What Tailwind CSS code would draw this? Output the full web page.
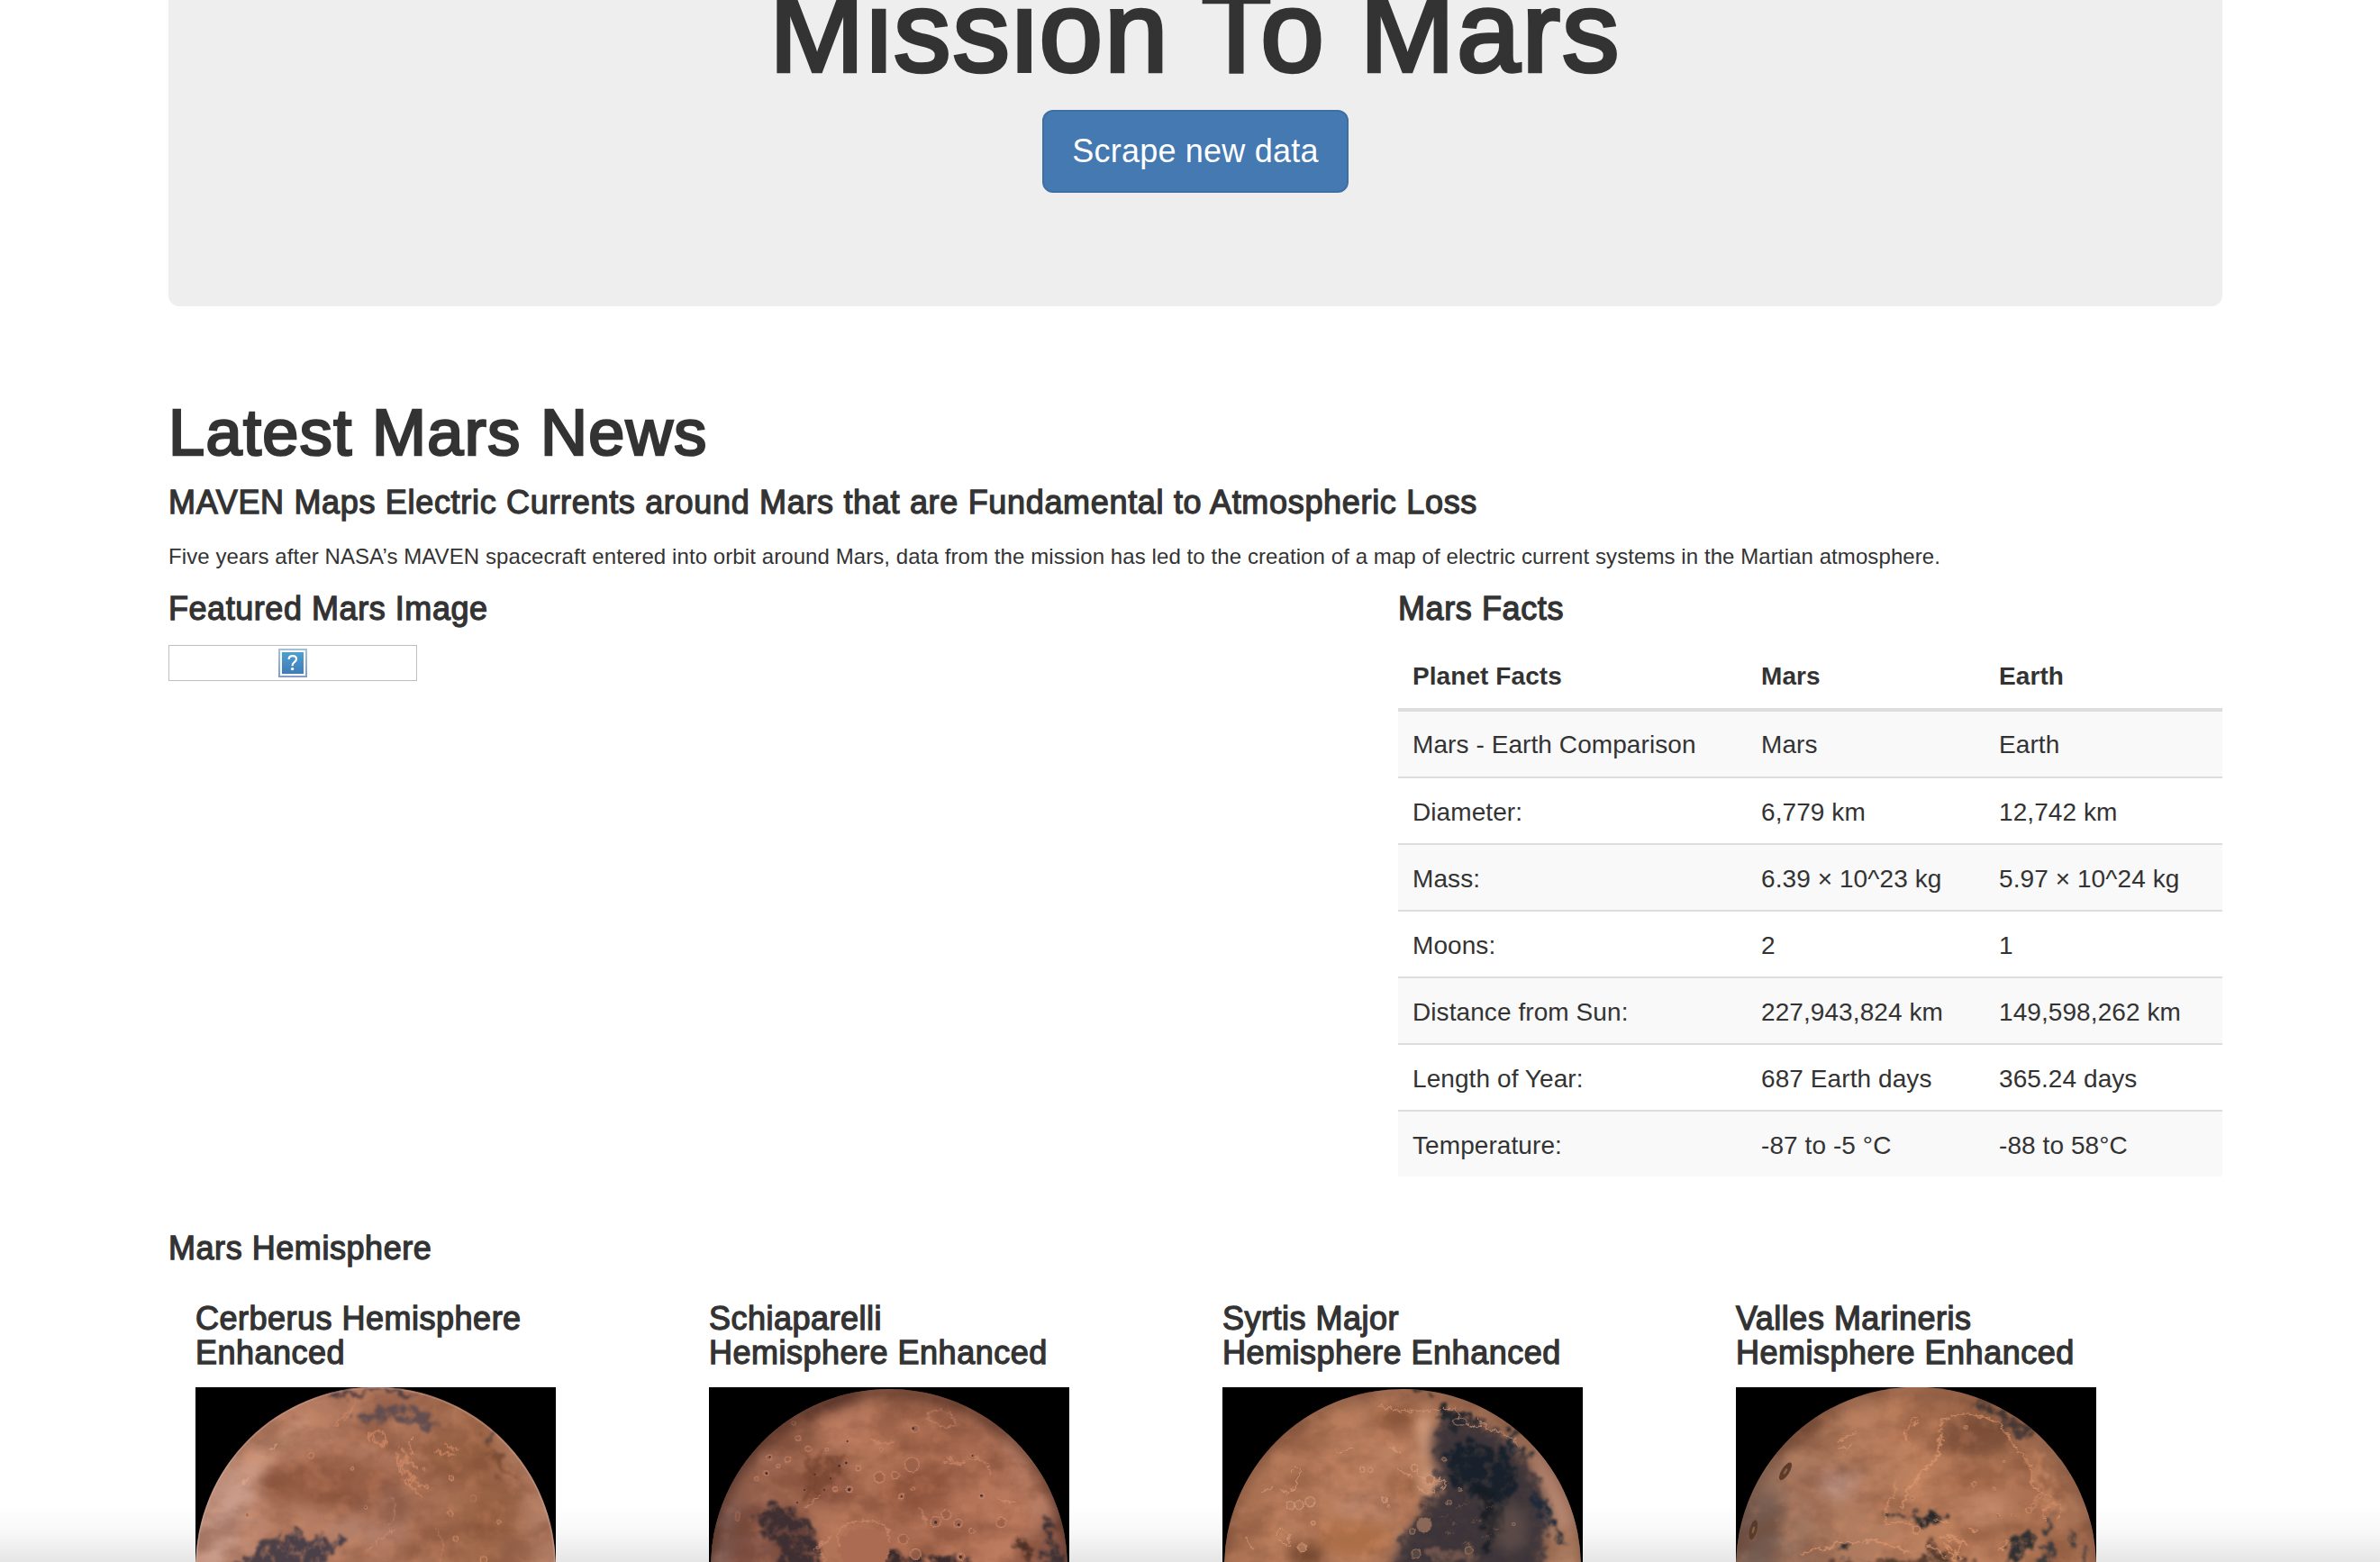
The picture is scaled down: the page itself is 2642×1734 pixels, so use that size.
<!DOCTYPE html>
<html lang="en">
<head>
<meta charset="utf-8">
<title>Mission To Mars</title>
<script src="https://cdn.jsdelivr.net/npm/@tailwindcss/browser@4"></script>
</head>
<body class="bg-white text-[#333] font-['Liberation_Sans',Arial,sans-serif] h-[1734px] overflow-hidden whitespace-nowrap relative">

<!-- shared planet filters -->
<svg class="absolute w-0 h-0" aria-hidden="true">
  <defs>
    <filter id="rough" x="-30%" y="-30%" width="160%" height="160%" color-interpolation-filters="sRGB">
      <feTurbulence type="fractalNoise" baseFrequency="0.025" numOctaves="6" seed="4" result="n"/>
      <feDisplacementMap in="SourceGraphic" in2="n" scale="90" xChannelSelector="R" yChannelSelector="G" result="d"/>
      <feGaussianBlur in="d" stdDeviation="5" result="b"/>
      <feTurbulence type="fractalNoise" baseFrequency="0.03" numOctaves="5" seed="31"/>
      <feColorMatrix values="0 0 0 0 0  0 0 0 0 0  0 0 0 0 0  3.4 0 0 0 -0.85" result="m"/>
      <feComposite in="b" in2="m" operator="in" result="t"/>
      <feComponentTransfer in="b" result="f"><feFuncA type="linear" slope="0.45"/></feComponentTransfer>
      <feMerge><feMergeNode in="f"/><feMergeNode in="t"/></feMerge>
    </filter>
    <filter id="fine" x="-20%" y="-20%" width="140%" height="140%" color-interpolation-filters="sRGB">
      <feTurbulence type="fractalNoise" baseFrequency="0.06" numOctaves="4" seed="8" result="n"/>
      <feDisplacementMap in="SourceGraphic" in2="n" scale="26" xChannelSelector="R" yChannelSelector="G"/>
      <feGaussianBlur stdDeviation="1.2"/>
    </filter>
    <filter id="ring" x="-5%" y="-5%" width="110%" height="110%" color-interpolation-filters="sRGB">
      <feTurbulence type="fractalNoise" baseFrequency="0.08" numOctaves="3" seed="5" result="n"/>
      <feDisplacementMap in="SourceGraphic" in2="n" scale="9" xChannelSelector="R" yChannelSelector="G"/>
      <feGaussianBlur stdDeviation="0.9"/>
    </filter>
    <filter id="soft" x="-60%" y="-60%" width="220%" height="220%" color-interpolation-filters="sRGB"><feGaussianBlur stdDeviation="20"/></filter>
    <filter id="darkNoise" x="0" y="0" width="100%" height="100%" color-interpolation-filters="sRGB">
      <feTurbulence type="fractalNoise" baseFrequency="0.006 0.009" numOctaves="7" seed="11"/>
      <feColorMatrix values="0 0 0 0 0.44  0 0 0 0 0.25  0 0 0 0 0.17  3 0 0 0 -1.2"/>
    </filter>
    <filter id="lightNoise" x="0" y="0" width="100%" height="100%" color-interpolation-filters="sRGB">
      <feTurbulence type="fractalNoise" baseFrequency="0.014" numOctaves="7" seed="23"/>
      <feColorMatrix values="0 0 0 0 0.88  0 0 0 0 0.59  0 0 0 0 0.44  0 3.4 0 0 -1.65"/>
    </filter>
    <radialGradient id="limb" gradientUnits="userSpaceOnUse" cx="600" cy="620" r="600">
      <stop offset="0.8" stop-color="#3a2018" stop-opacity="0"/><stop offset="0.94" stop-color="#3a2018" stop-opacity="0.12"/><stop offset="1" stop-color="#2a1612" stop-opacity="0.4"/>
    </radialGradient>
    <linearGradient id="g1" x1="0" y1="0.6" x2="1" y2="0.6"><stop offset="0" stop-color="#c09483"/><stop offset="0.22" stop-color="#b98066"/><stop offset="0.5" stop-color="#ad755c"/><stop offset="0.8" stop-color="#a16a4c"/><stop offset="1" stop-color="#b5826b"/></linearGradient>
    <linearGradient id="g2" x1="0" y1="0.4" x2="1" y2="0.6"><stop offset="0" stop-color="#8d5c4c"/><stop offset="0.4" stop-color="#b37559"/><stop offset="0.6" stop-color="#a86a50"/><stop offset="0.9" stop-color="#bd7c60"/><stop offset="1" stop-color="#956252"/></linearGradient>
    <linearGradient id="g3" x1="0" y1="0.4" x2="1" y2="0.6"><stop offset="0" stop-color="#ab7252"/><stop offset="0.45" stop-color="#bc8161"/><stop offset="0.8" stop-color="#a9785d"/><stop offset="1" stop-color="#b48468"/></linearGradient>
    <linearGradient id="g4" x1="0" y1="0.6" x2="1" y2="0.4"><stop offset="0" stop-color="#86695b"/><stop offset="0.2" stop-color="#ab7a60"/><stop offset="0.5" stop-color="#bc805e"/><stop offset="0.8" stop-color="#aa7152"/><stop offset="1" stop-color="#b07c60"/></linearGradient>
    <clipPath id="discA"><circle cx="600" cy="599" r="600"/></clipPath>
    <clipPath id="discB"><circle cx="600" cy="600" r="594"/></clipPath>
  </defs>
</svg>

<main class="ml-[187px] w-[2280px] flex flex-col">
  <header class="h-[340px] rounded-b-[12px] bg-[#eee] flex flex-col items-center">
    <h1 class="-mt-[33px] h-[138px] text-[126px] leading-[138px] tracking-[2.5px] [-webkit-text-stroke:4.4px_#333]">Mission To Mars</h1>
    <a class="mt-[17px] flex h-[92px] w-[340px] items-center justify-center rounded-[12px] border-2 border-[#3d6fa5] bg-[#4579b2] text-[36px] leading-[48px] tracking-[0.22px] text-white">Scrape new data</a>
  </header>

  <section class="flex flex-col">
    <h1 class="mt-[100px] text-[72px] leading-[80px] tracking-[1.4px] [-webkit-text-stroke:2.700px_#333]">Latest Mars News</h1>
    <h3 class="mt-[19px] text-[36px] leading-[38px] tracking-[0.68px] [-webkit-text-stroke:1.300px_#333]">MAVEN Maps Electric Currents around Mars that are Fundamental to Atmospheric Loss</h3>
    <p class="mt-[24px] text-[24px] leading-[34px] tracking-[0.085px]">Five years after NASA’s MAVEN spacecraft entered into orbit around Mars, data from the mission has led to the creation of a map of electric current systems in the Martian atmosphere.</p>
  </section>

  <section class="mt-[22px] flex justify-between">
    <div>
      <h3 class="text-[36px] leading-[38px] tracking-[0.55px] [-webkit-text-stroke:1.300px_#333]">Featured Mars Image</h3>
      <div class="mt-[21px] flex h-[40px] w-[276px] items-center justify-center border border-[#bfbfbf]">
        <svg width="32" height="32" viewBox="0 0 32 32">
          <defs>
            <linearGradient id="qb" x2="0" y2="1"><stop stop-color="#a6c1dd"/><stop offset="1" stop-color="#7f9dc7"/></linearGradient>
            <linearGradient id="qf" x2="0" y2="1"><stop stop-color="#4c9fd1"/><stop offset="1" stop-color="#3f7db8"/></linearGradient>
          </defs>
          <rect width="32" height="32" fill="url(#qb)"/><rect x="2" y="2" width="28" height="28" fill="#fff"/><rect x="4" y="4" width="24" height="24" fill="url(#qf)"/>
          <path d="M11.600 12c0-2.400 1.700-3.900 4.200-3.900 2.500 0 4.200 1.400 4.200 3.500 0 1.700-.9 2.600-2.200 3.500-1.500 1-2.100 1.700-2.100 3.200v1" fill="none" stroke="#fff" stroke-width="2.200"/><circle cx="15.600" cy="22.600" r="1.700" fill="#fff"/>
        </svg>
      </div>
    </div>
    <div class="w-[915px]">
      <h3 class="text-[36px] leading-[38px] tracking-[0.6px] [-webkit-text-stroke:1.300px_#333]">Mars Facts</h3>
      <div class="mt-[19px] text-[28px] leading-[40px] tracking-[0.08px] *:grid *:grid-cols-[387px_264px_264px] *:border-[#ddd] *:*:pl-4">
        <div class="h-[76px] border-b-4 pt-[17px] font-bold"><span>Planet Facts</span><span>Mars</span><span>Earth</span></div>
        <div class="h-[74px] border-b-2 bg-[#f9f9f9] pt-[17px]"><span>Mars - Earth Comparison</span><span>Mars</span><span>Earth</span></div>
        <div class="h-[74px] border-b-2 pt-[18px]"><span>Diameter:</span><span>6,779 km</span><span>12,742 km</span></div>
        <div class="h-[74px] border-b-2 bg-[#f9f9f9] pt-[18px]"><span>Mass:</span><span>6.39 × 10^23 kg</span><span>5.97 × 10^24 kg</span></div>
        <div class="h-[74px] border-b-2 pt-[18px]"><span>Moons:</span><span>2</span><span>1</span></div>
        <div class="h-[74px] border-b-2 bg-[#f9f9f9] pt-[18px]"><span>Distance from Sun:</span><span>227,943,824 km</span><span>149,598,262 km</span></div>
        <div class="h-[74px] border-b-2 pt-[18px]"><span>Length of Year:</span><span>687 Earth days</span><span>365.24 days</span></div>
        <div class="h-[72px] bg-[#f9f9f9] pt-[18px]"><span>Temperature:</span><span>-87 to -5 °C</span><span>-88 to 58°C</span></div>
      </div>
    </div>
  </section>

  <section class="mt-[61px]">
    <h3 class="text-[36px] leading-[38px] tracking-[0.55px] [-webkit-text-stroke:1.300px_#333]">Mars Hemisphere</h3>
    <div class="relative z-10 mt-[40px] grid grid-cols-4 pl-[30px] w-[2310px] text-[36px] leading-[38px] tracking-[0.5px]">

      <figure>
        <figcaption class="[-webkit-text-stroke:1.300px_#333]">Cerberus Hemisphere<br>Enhanced</figcaption>
        <svg class="mt-[19px] block bg-black" width="400" height="194" viewBox="0 0 1200 582">
          <g clip-path="url(#discA)">
            <rect width="1200" height="600" fill="url(#g1)"/>
            <g filter="url(#soft)">
              <ellipse cx="440" cy="320" rx="220" ry="80" fill="#8f573f" opacity=".75"/>
              <ellipse cx="880" cy="230" rx="120" ry="70" fill="#925d3f" opacity=".6"/>
              <ellipse cx="1000" cy="420" rx="80" ry="120" fill="#8f5a3c" opacity=".5"/>
              <ellipse cx="120" cy="420" rx="50" ry="200" fill="#cfa494" opacity=".7" transform="rotate(24 120 420)"/>
              <ellipse cx="270" cy="190" rx="140" ry="36" fill="#cf9a80" opacity=".7" transform="rotate(-40 270 190)"/>
              <ellipse cx="660" cy="410" rx="50" ry="90" fill="#855c50" opacity=".5"/>
              <ellipse cx="560" cy="480" rx="140" ry="50" fill="#b5836f" opacity=".6"/>
            </g>
            <rect width="1200" height="600" filter="url(#darkNoise)" opacity=".35"/>
            <rect width="1200" height="600" filter="url(#lightNoise)" opacity=".22"/>
            <g filter="url(#rough)">
              <path d="M540 100Q600 65 690 72Q780 82 810 128Q760 145 710 118Q640 90 540 115Z" fill="#5d4b50" opacity=".85"/>
              <path d="M440 22Q620 -8 780 22L690 26Q600 12 440 34Z" fill="#503d42"/>
              <path d="M150 580Q220 510 290 500Q330 470 350 500Q400 510 500 500Q490 540 420 570L380 620H130Z" fill="#4b4048"/>
              <path d="M955 135l40 25-10 15z" fill="#453a40"/>
              <path d="M980 170Q1000 250 1060 320Q1010 290 970 220Z" fill="#7c4d35"/>
            </g>
            <g filter="url(#fine)" fill="none" stroke="#dc9069" stroke-width="7" stroke-linecap="round" opacity=".6">
              <path d="M590 150q10 60 40 40q10-40-20-45q-40 5-30 30M690 200l20 50-30 10 50 40-40 10 60 50M680 250h40M830 190l40 20M800 215l60 10M720 300q20 30 50 30M670 220l10 60 30 10M700 240l40 30M710 180l10 40"/>
              <path d="M570 550q50-50 90-80M460 130q30-30 60-60M500 110q20-30 30-50" stroke-width="4"/>
              <path d="M160 320q10-20 20-20M255 205l15-15" stroke="#e4ac8c"/>
              <path d="M800 470q40 50 10 130M650 360q30 40 0 100" stroke-width="4" opacity=".6"/>
            </g>
            <g fill="#a66a4c" stroke="#d69370" stroke-width="3" filter="url(#ring)" opacity=".85">
              <circle cx="385" cy="228" r="9"/><circle cx="522" cy="270" r="6"/><circle cx="852" cy="302" r="8"/><circle cx="848" cy="420" r="8"/><circle cx="866" cy="504" r="9"/><circle cx="1010" cy="448" r="6"/><circle cx="715" cy="316" r="6"/><circle cx="172" cy="425" r="7"/><circle cx="760" cy="272" r="5"/><circle cx="925" cy="370" r="11" opacity=".5"/><circle cx="960" cy="575" r="12"/><circle cx="567" cy="400" r="5" fill="#55413b"/><circle cx="720" cy="170" r="5"/><circle cx="450" cy="180" r="3" fill="#55413b"/><circle cx="680" cy="200" r="3" fill="#383038"/><circle cx="770" cy="332" r="6"/>
            </g>
            <circle cx="600" cy="599" r="597" fill="none" stroke="#d3b0a5" stroke-width="5" opacity=".4"/>
          </g>
        </svg>
      </figure>

      <figure>
        <figcaption class="[-webkit-text-stroke:1.300px_#333]">Schiaparelli<br>Hemisphere Enhanced</figcaption>
        <svg class="mt-[19px] block bg-black" width="400" height="194" viewBox="0 0 1200 582">
          <g clip-path="url(#discB)">
            <rect width="1200" height="600" fill="url(#g2)"/>
            <g filter="url(#soft)">
              <ellipse cx="500" cy="130" rx="150" ry="70" fill="#c78468" opacity=".7"/>
              <ellipse cx="390" cy="320" rx="100" ry="70" fill="#804c3b" opacity=".7"/>
              <ellipse cx="690" cy="340" rx="120" ry="70" fill="#8f533c" opacity=".7"/>
              <ellipse cx="1060" cy="300" rx="50" ry="160" fill="#d09075" opacity=".7" transform="rotate(-25 1060 300)"/>
              <ellipse cx="180" cy="500" rx="180" ry="110" fill="#734a42" opacity=".7"/>
              <ellipse cx="390" cy="70" rx="110" ry="22" fill="#633a2d" opacity=".8" transform="rotate(-28 390 70)"/>
              <ellipse cx="50" cy="500" rx="30" ry="130" fill="#8c706f" opacity=".7" transform="rotate(15 50 500)"/>
            </g>
            <rect width="1200" height="600" filter="url(#darkNoise)" opacity=".4"/>
            <rect width="1200" height="600" filter="url(#lightNoise)" opacity=".2"/>
            <g filter="url(#rough)">
              <path d="M220 620Q250 570 230 530Q180 500 160 410Q250 380 320 430Q350 500 370 550L390 620Z" fill="#3c2d31" opacity=".9"/>
              <path d="M590 530Q660 560 720 565Q800 545 850 580L930 620H580Z" fill="#3b2b2c"/>
              <path d="M320 240Q400 230 460 210L440 300Q380 320 360 390L300 380Q350 310 320 240Z" fill="#74432f" opacity=".6"/>
              <path d="M1110 410Q1150 480 1190 620H1100Q1140 560 1110 410Z" fill="#413539"/>
              <path d="M1020 480l30 40 30 40-40-10z" fill="#4f3026"/>
            </g>
            <ellipse cx="515" cy="540" rx="85" ry="72" fill="#ab6b53" filter="url(#fine)"/>
            <g filter="url(#fine)" fill="none" stroke="#d08e70" stroke-width="5" stroke-linecap="round" opacity=".65">
              <path d="M430 530q-20-80 80-85t90 70M350 545q30-30 60-50M790 230q30 30 60 20M780 250l60 10M860 240q60-20 80 50M540 170q40 30 80 10M700 400q20 40 30 60M320 400l50-40M960 370q30 20 60 10M365 520l20 60M400 500l-30 30"/>
              <path d="M730 100q40 50 90 25q0-50-70-50q-30 10-20 25"/>
            </g>
            <g fill="#9c614a" stroke="#cc8b6e" stroke-width="3.500" filter="url(#ring)" opacity=".85">
              <circle cx="676" cy="258" r="24"/><circle cx="567" cy="300" r="18"/><circle cx="620" cy="293" r="12"/><circle cx="686" cy="138" r="12"/><circle cx="262" cy="240" r="9"/><circle cx="200" cy="234" r="8"/><circle cx="190" cy="286" r="8"/><circle cx="790" cy="425" r="16"/><circle cx="755" cy="448" r="17"/><circle cx="830" cy="453" r="14"/><circle cx="973" cy="450" r="17"/><circle cx="646" cy="505" r="16"/><circle cx="688" cy="556" r="18"/><circle cx="875" cy="478" r="9"/><circle cx="468" cy="340" r="10"/><circle cx="330" cy="205" r="9"/><circle cx="296" cy="170" r="8"/><circle cx="680" cy="338" r="6"/><circle cx="573" cy="208" r="5"/><circle cx="392" cy="208" r="5"/><circle cx="497" cy="270" r="8"/><circle cx="420" cy="340" r="8"/><circle cx="640" cy="364" r="8"/><circle cx="909" cy="362" r="8"/><ellipse cx="95" cy="430" rx="7" ry="15" opacity=".6"/><circle cx="158" cy="305" r="7"/><circle cx="230" cy="262" r="6"/><circle cx="282" cy="120" r="7"/><circle cx="840" cy="565" r="11"/>
            </g>
            <g fill="#3a3034">
              <circle cx="434" cy="262" r="4"/><circle cx="457" cy="252" r="4"/><circle cx="352" cy="290" r="3"/><circle cx="405" cy="304" r="3"/><circle cx="467" cy="341" r="5"/><circle cx="294" cy="384" r="3"/><circle cx="907" cy="361" r="4"/><circle cx="755" cy="450" r="5"/><circle cx="192" cy="287" r="4"/><circle cx="203" cy="232" r="3"/><circle cx="680" cy="137" r="4"/><circle cx="838" cy="565" r="5"/><circle cx="832" cy="458" r="4"/><circle cx="461" cy="180" r="3"/><circle cx="318" cy="342" r="3"/><circle cx="642" cy="364" r="3"/><circle cx="878" cy="228" r="3"/><circle cx="384" cy="342" r="3"/>
            </g>
            <rect width="1200" height="600" fill="url(#limb)"/>
          </g>
        </svg>
      </figure>

      <figure>
        <figcaption class="[-webkit-text-stroke:1.300px_#333]">Syrtis Major<br>Hemisphere Enhanced</figcaption>
        <svg class="mt-[19px] block bg-black" width="400" height="194" viewBox="0 0 1200 582">
          <g clip-path="url(#discB)">
            <rect width="1200" height="600" fill="url(#g3)"/>
            <g filter="url(#soft)">
              <ellipse cx="570" cy="100" rx="70" ry="35" fill="#8c5638" opacity=".8"/>
              <ellipse cx="600" cy="320" rx="60" ry="45" fill="#8f5b3d" opacity=".8"/>
              <ellipse cx="440" cy="500" rx="120" ry="70" fill="#a86a42" opacity=".8"/>
              <ellipse cx="280" cy="560" rx="60" ry="35" fill="#744a32"/>
              <ellipse cx="470" cy="400" rx="90" ry="50" fill="#c5917a" opacity=".6"/>
            </g>
            <rect width="1200" height="600" filter="url(#darkNoise)" opacity=".3"/>
            <rect width="1200" height="600" filter="url(#lightNoise)" opacity=".25"/>
            <g filter="url(#soft)">
              <path d="M700 150Q760 80 830 110Q960 170 1010 260Q1070 350 1090 440Q1050 500 1060 620H560Q560 560 640 460Q700 380 740 350Q690 260 700 150Z" fill="#3c3438" opacity=".9"/>
              <ellipse cx="672" cy="160" rx="16" ry="90" fill="#dba688"/>
              <ellipse cx="690" cy="310" rx="40" ry="45" fill="#d09a7c"/>
              <ellipse cx="1110" cy="350" rx="34" ry="160" fill="#bf8d76" transform="rotate(-24 1110 350)"/>
            </g>
            <g filter="url(#rough)">
              <path d="M715 130Q760 85 830 115Q900 150 960 160Q1000 200 1010 260Q1060 330 1090 440Q1060 480 1080 620H580Q610 570 580 510Q660 460 680 370Q740 350 730 310Q700 260 715 130Z" fill="#38343b" opacity=".6"/>
              <path d="M740 220Q840 150 940 220Q990 330 950 390L800 350Q740 320 740 220Z" fill="#18212b"/>
              <path d="M840 320Q920 350 935 420Q930 520 850 570Q900 450 840 320Z" fill="#171c22" opacity=".8"/>
              <path d="M1030 350Q1100 390 1110 470Q1060 440 1030 350ZM1105 450l35 70-25 5zM940 160q60 20 80 90l-60-40z" fill="#1d2a3a"/>
              <path d="M610 0l80 10-50 10zM720 80q70-10 130 40l-80 20z" fill="#24272e"/>
            </g>
            <ellipse cx="960" cy="470" rx="60" ry="80" fill="#7d6257" opacity=".45" filter="url(#soft)"/>
            <ellipse cx="760" cy="560" rx="80" ry="30" fill="#7c5c50" opacity=".8" filter="url(#rough)"/>
            <g filter="url(#fine)" fill="none" stroke="#d79a78" stroke-width="5" stroke-linecap="round" opacity=".7">
              <path d="M520 60q80 30 180 15t90 30M560 200l30 20M580 270l50 30M640 260q20 60 70 50t20 30M540 380q20-20 10 20M230 280q40-30 20 30t-60 30M130 350l40-20M380 220l50-20M850 100q20 40 70 50t60 40M180 490q20-40 40 10t-30 10M80 500l20 40M650 330q30 40 60 10M800 110q30 30 60 20"/>
              <path d="M740 480l30 10M830 450l30-10M780 400l40-10M860 500l30-8M720 430l30-5M880 400l20-5M800 520l20-5M760 450l20 4M900 470l20 4" stroke-width="3" opacity=".4"/>
            </g>
            <g fill="#b17a5c" stroke="#cf9876" stroke-width="4" filter="url(#ring)" opacity=".85">
              <circle cx="292" cy="382" r="17"/><circle cx="255" cy="392" r="15"/><circle cx="226" cy="393" r="13"/><circle cx="466" cy="275" r="8"/><circle cx="492" cy="276" r="8"/><circle cx="640" cy="268" r="11"/><circle cx="690" cy="308" r="15"/><circle cx="265" cy="535" r="14"/><circle cx="302" cy="452" r="7"/><circle cx="540" cy="375" r="9"/>
            </g>
            <g fill="#5c4c44" stroke="#98735f" stroke-width="4" filter="url(#ring)" opacity=".8">
              <circle cx="672" cy="458" r="24" fill="#9c735f"/><circle cx="632" cy="480" r="9"/><ellipse cx="790" cy="115" rx="24" ry="12" fill="#262b33"/><circle cx="755" cy="384" r="8"/><circle cx="738" cy="240" r="6"/><circle cx="790" cy="340" r="6"/><circle cx="820" cy="543" r="12"/><circle cx="645" cy="555" r="15"/><circle cx="970" cy="456" r="5"/>
            </g>
            <rect width="1200" height="600" fill="url(#limb)" opacity=".5"/>
          </g>
        </svg>
      </figure>

      <figure>
        <figcaption class="[-webkit-text-stroke:1.300px_#333]">Valles Marineris<br>Hemisphere Enhanced</figcaption>
        <svg class="mt-[19px] block bg-black" width="400" height="194" viewBox="0 0 1200 582">
          <g clip-path="url(#discA)">
            <rect width="1200" height="600" fill="url(#g4)"/>
            <g filter="url(#soft)">
              <ellipse cx="800" cy="160" rx="130" ry="75" fill="#7b503a" opacity=".85"/>
              <ellipse cx="340" cy="320" rx="75" ry="50" fill="#bb9080"/>
              <ellipse cx="380" cy="275" rx="60" ry="20" fill="#86604e" opacity=".8"/>
              <ellipse cx="780" cy="320" rx="80" ry="50" fill="#a06848" opacity=".6"/>
              <ellipse cx="830" cy="410" rx="90" ry="60" fill="#c78e70" opacity=".6"/>
              <ellipse cx="90" cy="480" rx="60" ry="130" fill="#6f5b52" opacity=".7" transform="rotate(15 90 480)"/>
              <ellipse cx="240" cy="130" rx="150" ry="20" fill="#744a32" opacity=".7" transform="rotate(-40 240 130)"/>
            </g>
            <rect width="1200" height="600" filter="url(#darkNoise)" opacity=".32"/>
            <rect width="1200" height="600" filter="url(#lightNoise)" opacity=".22"/>
            <g filter="url(#rough)">
              <path d="M770 45Q850 55 900 85Q970 130 975 170Q930 160 885 115Q840 75 770 45Z" fill="#4b3f3b"/>
              <path d="M590 425Q640 400 700 440Q660 462 610 455Z" fill="#26282b"/>
              <path d="M500 405q30 20 75 20l-50 18zM330 535l60-14-30 38z" fill="#2e2c2c"/>
              <path d="M910 510Q960 485 990 505Q970 575 910 570Z" fill="#302f31"/>
              <path d="M630 515Q690 530 700 565Q770 560 800 610H240Q400 570 560 590Q650 570 630 515Z" fill="#4a352b" opacity=".8"/>
              <path d="M1025 425l30 10-10 50-20-10zM1055 405l20 10-10 12zM1030 510l30 30-10 70h-20zM1115 470l15 40-20 40zM1160 490l10 70-15 20z" fill="#3b3a3d"/>
            </g>
            <g filter="url(#fine)" fill="none" stroke="#db966e" stroke-linecap="round" opacity=".75">
              <path d="M680 160q0 30-5 60q-20 40-60 60q-20 50-45 60q0 30-20 60" stroke-width="8"/>
              <path d="M690 170q-20-30 0-60q40-30 110-15t80 30q40 60 80 110t20 80q30 40 70 50" stroke-width="5"/>
              <path d="M600 100q-40 30-30 70M590 130l20-20M560 140q0 40 20 50M530 310v50q-30 20-30 40v60q50-20 90 0q0 30 20 30" stroke-width="4"/>
              <path d="M220 555q40-20 100-20l10-20q60 10 120-5q80 20 130 40M640 530q40 10 60 40M690 520q30 10 60 50M750 520q-20 30-20 50M700 490l70 30M770 470l30 10M880 540l30-30M660 440l50 10M680 500l80 20M700 530l30 50" stroke-width="6"/>
              <path d="M340 190q20-30 60-40M345 200q20 15 40-10M1030 440q-10-50 30-50t10 50" stroke-width="4"/>
            </g>
            <path d="M980 220l30 80 10 60 60 60" fill="none" stroke="#d7946d" stroke-width="40" opacity=".5" filter="url(#rough)"/>
            <ellipse cx="165" cy="280" rx="13" ry="34" fill="#5e3d2a" transform="rotate(32 165 280)"/><ellipse cx="165" cy="280" rx="4" ry="11" fill="#8e6244" transform="rotate(32 165 280)"/>
            <ellipse cx="58" cy="475" rx="12" ry="34" fill="#5a3d2c" transform="rotate(14 58 475)"/><ellipse cx="58" cy="475" rx="4" ry="12" fill="#8e6244" transform="rotate(14 58 475)"/>
            <g fill="#a66d4f" stroke="#d08f6a" stroke-width="3" filter="url(#ring)">
              <circle cx="793" cy="323" r="8"/><circle cx="765" cy="134" r="6"/><circle cx="860" cy="338" r="5"/><circle cx="872" cy="426" r="5"/><circle cx="602" cy="474" r="12"/><circle cx="990" cy="395" r="8"/><circle cx="1010" cy="362" r="7"/><circle cx="975" cy="410" r="9"/><circle cx="922" cy="425" r="5"/><circle cx="893" cy="248" r="4"/><circle cx="587" cy="369" r="6"/><circle cx="375" cy="80" r="4"/>
            </g>
            <rect width="1200" height="600" fill="url(#limb)" opacity=".45"/>
          </g>
        </svg>
      </figure>
    </div>
  </section>
</main>

<!-- fade along the bottom edge of the window -->
<div class="absolute inset-x-0 bottom-0 h-[64px] bg-linear-to-b from-black/0 via-black/[0.03] to-black/10"></div>
</body>
</html>
